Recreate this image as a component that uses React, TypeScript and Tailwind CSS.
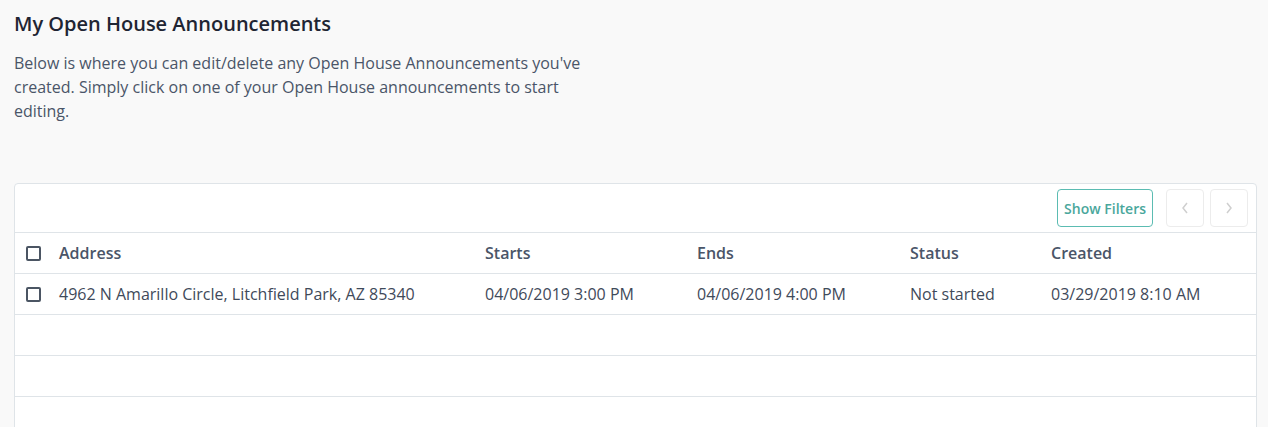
import React from "react";

const cols = "grid grid-cols-[44px_426px_212px_213px_141px_1fr] items-center";

function Box() {
  return <span className="block w-[15px] h-[15px] border-2 border-[#4b5563] rounded-[2px]" />;
}

export default function App() {
  const empty = [0, 1, 2];
  return (
    <div className="min-h-screen bg-[#f9f9f9] pl-[14px] pr-[11px] pt-[10px] pb-10 text-[#4a5568]" style={{ fontFamily: '"Open Sans", sans-serif' }}>
      <h1 className="text-[20px] leading-[28px] font-semibold text-[#1f2533]">My Open House Announcements</h1>
      <p className="mt-[13px] text-[16px] leading-[24px] max-w-[600px] text-[#4a5568]">
        Below is where you can edit/delete any Open House Announcements you've created. Simply click on one of your Open House announcements to start editing.
      </p>
      <div className="mt-[60px] bg-white border border-[#dfe4e8] rounded-[4px]">
        <div className="flex justify-end items-center pt-[5px] pb-[5px] pr-[8px] border-b border-[#dfe4e8]">
          <button className="h-[38px] px-[6px] border border-[#5bbcb2] rounded-[4px] text-[14px] font-semibold text-[#4aa79c]">Show Filters</button>
          <button className="ml-[13px] w-[38px] h-[38px] border border-[#ececec] rounded-[4px] flex items-center justify-center text-[#cfcfcf]">
            <svg width="10" height="14" viewBox="0 0 10 14" fill="none" stroke="currentColor" strokeWidth="1.5"><path d="M7 2 L3 7 L7 12" /></svg>
          </button>
          <button className="ml-[6px] w-[38px] h-[38px] border border-[#ececec] rounded-[4px] flex items-center justify-center text-[#cfcfcf]">
            <svg width="10" height="14" viewBox="0 0 10 14" fill="none" stroke="currentColor" strokeWidth="1.5"><path d="M3 2 L7 7 L3 12" /></svg>
          </button>
        </div>
        <div className={`${cols} h-[41px] border-b border-[#dfe4e8] text-[16px] font-semibold text-[#4a5568]`}>
          <div className="pl-[11px]"><Box /></div>
          <div>Address</div>
          <div>Starts</div>
          <div>Ends</div>
          <div>Status</div>
          <div>Created</div>
        </div>
        <div className={`${cols} h-[41px] border-b border-[#dfe4e8] text-[16px] text-[#3f4a5a]`}>
          <div className="pl-[11px]"><Box /></div>
          <div>4962 N Amarillo Circle, Litchfield Park, AZ 85340</div>
          <div>04/06/2019 3:00 PM</div>
          <div>04/06/2019 4:00 PM</div>
          <div>Not started</div>
          <div>03/29/2019 8:10 AM</div>
        </div>
        {empty.map((i) => (
          <div key={i} className="h-[41px] border-b border-[#dfe4e8]" />
        ))}
      </div>
    </div>
  );
}
